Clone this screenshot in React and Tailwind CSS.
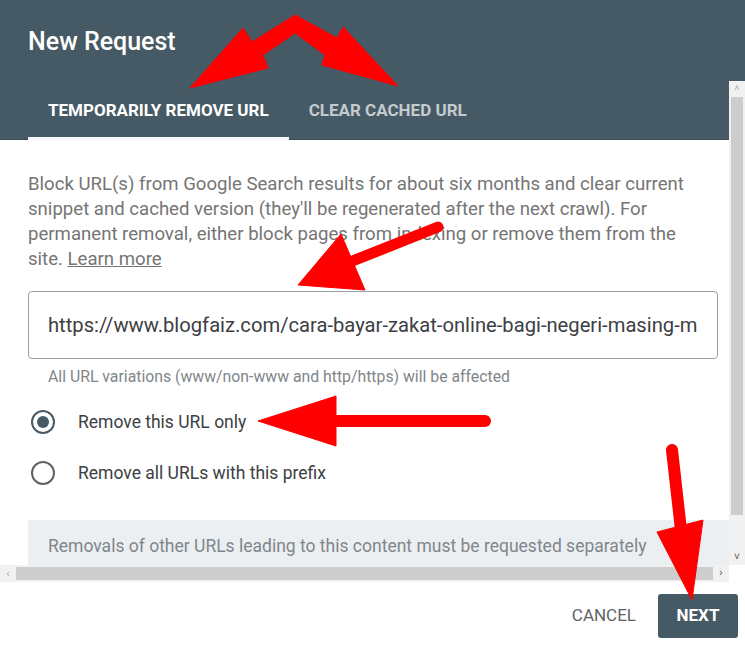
import React from 'react';

const Radio = ({ checked, label }) => (
  <label className="flex items-center h-[26px]">
    <span className={`w-[24px] h-[24px] rounded-full border-2 flex items-center justify-center ${checked ? 'border-[#4a5a64]' : 'border-[#5f6368]'}`}>
      {checked && <span className="w-[12px] h-[12px] rounded-full bg-[#455a64]" />}
    </span>
    <span className="ml-[23px] text-[17.5px] text-[#3c4043]">{label}</span>
  </label>
);

const Arrows = () => (
  <svg className="absolute inset-0 pointer-events-none" width="745" height="646" viewBox="0 0 745 646">
    <g fill="#ff0000" stroke="#ff0000" strokeLinejoin="round">
      <polygon points="295,15 337,38 343,27 398,86 322,65 325,55 295,33 263,55 268,68 190,88 243,28 252,42" strokeWidth="1" />
      <line x1="438" y1="227" x2="350" y2="262" strokeWidth="11" strokeLinecap="round" />
      <polygon points="298,285 341,234 365,290" strokeWidth="1" />
      <line x1="330" y1="421" x2="485" y2="421" strokeWidth="12" strokeLinecap="round" />
      <polygon points="258,421 336,396 336,446" strokeWidth="1" />
      <line x1="672" y1="450" x2="681" y2="530" strokeWidth="12" strokeLinecap="round" />
      <polygon points="692,600 657,532 703,520" strokeWidth="1" />
    </g>
  </svg>
);

export default function App() {
  return (
    <div className="relative w-[745px] h-[646px] bg-white flex flex-col overflow-hidden font-['Roboto',sans-serif]">
      <div className="h-[81px] bg-[#465a65] px-[28px] pt-[3px] flex items-center">
        <h1 className="text-[25px] font-medium text-white">New Request</h1>
      </div>

      <div className="flex h-[484px]">
        <div className="flex-1 overflow-hidden">
          <div className="h-[59px] bg-[#465a65] border-b border-[#3b4c55] flex items-stretch px-[28px]">
            <div className="relative px-[20px] pt-[1px] flex items-center text-[17px] font-bold text-white uppercase">
              Temporarily remove URL
              <span className="absolute left-0 right-0 bottom-[-1px] h-[3px] bg-[#f5f7f8]" />
            </div>
            <div className="px-[20px] pt-[1px] flex items-center text-[17px] font-bold text-[#c3cbcf] uppercase">
              Clear cached URL
            </div>
          </div>

          <div className="pl-[28px] pr-[11px] pt-[32px]">
            <p className="pr-[17px] text-[18.6px] leading-[25px] text-[#757575]">
              Block URL(s) from Google Search results for about six months and clear current snippet and cached version (they'll be regenerated after the next crawl). For permanent removal, either block pages from indexing or remove them from the site. <span className="underline">Learn more</span>
            </p>

            <div className="mt-[19px] h-[68px] border border-[#9aa0a6] rounded-[4px] px-[19px] flex items-center">
              <div className="whitespace-nowrap overflow-hidden text-[20.2px] text-[#3c4043]">
                https://www.blogfaiz.com/cara-bayar-zakat-online-bagi-negeri-masing-m
              </div>
            </div>
            <p className="mt-[6px] pl-[20px] text-[15.8px] text-[#80868b]">
              All URL variations (www/non-www and http/https) will be affected
            </p>

            <div className="mt-[20px] pl-[3px] flex flex-col gap-[25px]">
              <Radio checked label="Remove this URL only" />
              <Radio label="Remove all URLs with this prefix" />
            </div>

            <div className="mt-[34px] -mr-[11px] h-[60px] bg-[#eceff1] px-[20px] pt-[13px]">
              <p className="text-[17.5px] text-[#80868b] whitespace-nowrap">
                Removals of other URLs leading to this content must be requested separately
              </p>
            </div>
          </div>
        </div>

        <div className="w-[16px] flex flex-col bg-[#f1f1f1]">
          <div className="h-[16px] flex items-center justify-center text-[9px] text-[#a3a3a3]">˄</div>
          <div className="h-[418px] mx-[2px] bg-[#cdcdcd]" />
          <div className="flex-1" />
          <div className="h-[17px] flex items-center justify-center text-[10px] text-[#505050]">˅</div>
        </div>
      </div>

      <div className="h-[17px] flex">
        <div className="w-[729px] flex bg-[#f1f1f1]">
          <div className="w-[16px] flex items-center justify-center text-[10px] text-[#a3a3a3]">‹</div>
          <div className="flex-1 my-[2px] bg-[#cdcdcd]" />
          <div className="w-[16px] flex items-center justify-center text-[11px] text-[#505050]">›</div>
        </div>
        <div className="flex-1 bg-white" />
      </div>

      <div className="flex-1 flex items-center justify-end pr-[7px] pt-[4px] gap-[14px]">
        <button className="px-[8px] h-[44px] text-[17px] text-[#5f6368] uppercase">Cancel</button>
        <button className="w-[80px] h-[44px] rounded-[3px] bg-[#465a65] text-[17px] font-bold text-white uppercase">Next</button>
      </div>

      <Arrows />
    </div>
  );
}
